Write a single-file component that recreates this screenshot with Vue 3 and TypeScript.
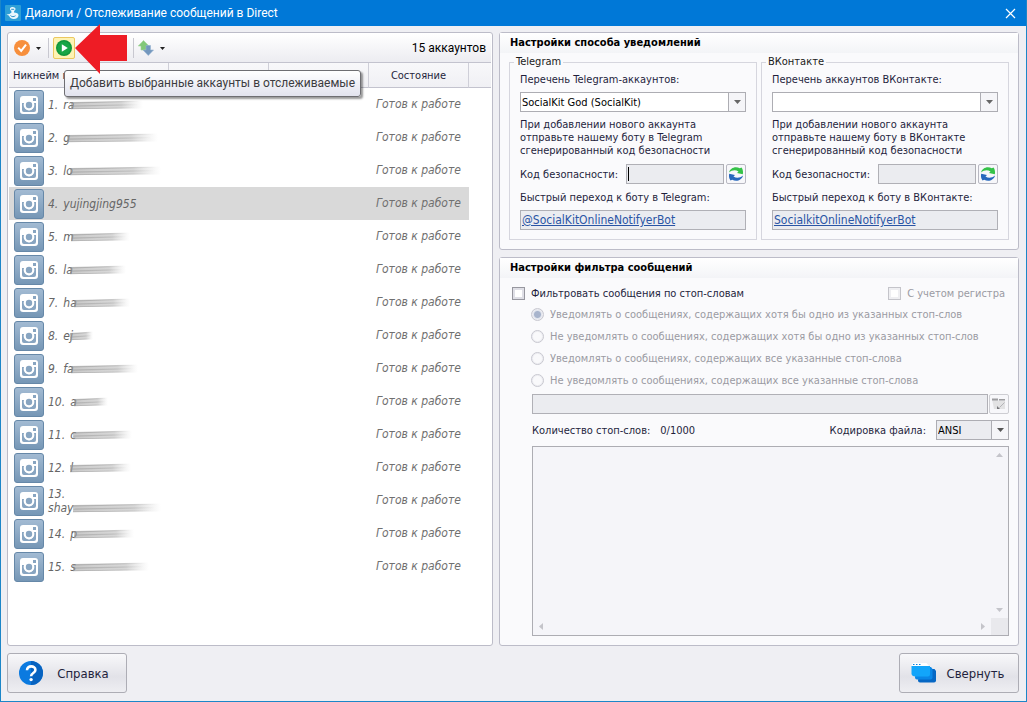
<script setup lang="ts">
import { ref } from 'vue'

interface Account {
  id: number
  name: string
  smudge: number
  wrap?: boolean
}

const accounts: Account[] = [
  { id: 1, name: 'ra', smudge: 72 },
  { id: 2, name: 'g', smudge: 91 },
  { id: 3, name: 'lo', smudge: 91 },
  { id: 4, name: 'yujingjing955', smudge: 0 },
  { id: 5, name: 'm', smudge: 59 },
  { id: 6, name: 'la', smudge: 56 },
  { id: 7, name: 'ha', smudge: 56 },
  { id: 8, name: 'ej', smudge: 23 },
  { id: 9, name: 'fa', smudge: 67 },
  { id: 10, name: 'a', smudge: 34 },
  { id: 11, name: 'c', smudge: 59 },
  { id: 12, name: 'l', smudge: 61 },
  { id: 13, name: 'shay', smudge: 88, wrap: true },
  { id: 14, name: 'p', smudge: 60 },
  { id: 15, name: 's', smudge: 76 },
]

const selected = ref(4)

interface Messenger {
  id: string
  title: string
  listLabel: string
  option: string
  hint: string[]
  linkLabel: string
  link: string
  active: boolean
}

const messengers: Messenger[] = [
  {
    id: 'tg',
    title: 'Telegram',
    listLabel: 'Перечень Telegram-аккаунтов:',
    option: 'SocialKit God (SocialKit)',
    hint: ['При добавлении нового аккаунта', 'отправьте нашему боту в Telegram', 'сгенерированный код безопасности'],
    linkLabel: 'Быстрый переход к боту в Telegram:',
    link: '@SocialKitOnlineNotifyerBot',
    active: true,
  },
  {
    id: 'vk',
    title: 'ВКонтакте',
    listLabel: 'Перечень аккаунтов ВКонтакте:',
    option: '',
    hint: ['При добавлении нового аккаунта', 'отправьте нашему боту в ВКонтакте', 'сгенерированный код безопасности'],
    linkLabel: 'Быстрый переход к боту в ВКонтакте:',
    link: 'SocialkitOnlineNotifyerBot',
    active: false,
  },
]

const modes: string[] = [
  'Уведомлять о сообщениях, содержащих хотя бы одно из указанных стоп-слов',
  'Не уведомлять о сообщениях, содержащих хотя бы одно из указанных стоп-слов',
  'Уведомлять о сообщениях, содержащих все указанные стоп-слова',
  'Не уведомлять о сообщениях, содержащих все указанные стоп-слова',
]
const mode = ref(0)
const filterOn = ref(false)
</script>

<template>
  <div class="window">
    <header class="titlebar">
      <svg class="app-icon" width="16" height="16" viewBox="0 0 16 16">
        <rect width="16" height="16" rx="1" fill="#2e9fd6" />
        <path d="M5 3.2a3 2.2 0 0 1 5.500.2c.2 1-.5 2-1.300 2.300l-.2 1.800c2.500 0 4.500.8 4.500 2.800 0 2.200-2 3.700-4.700 3.700-2.600 0-4.300-1.200-4.700-3.200L1.500 9.500l3-.5 2-1.500-.3-1.700C5.400 5.300 4.800 4.300 5 3.200z" fill="#e9f7fd" />
        <path d="M6.200 4.300h3M5.500 10.500c1.200 1.500 3.500 1.500 5 .2" stroke="#2e8fc6" stroke-width="1" fill="none" />
      </svg>
      <h1>Диалоги / Отслеживание сообщений в Direct</h1>
      <button class="close" type="button" aria-label="Закрыть">
        <svg width="11" height="11" viewBox="0 0 11 11"><path d="M1 1l9 9M10 1l-9 9" stroke="#fff" stroke-width="1.200" /></svg>
      </button>
    </header>

    <main class="content">
      <section class="panel accounts">
        <div class="toolbar">
          <button class="tool" type="button" aria-label="Выбрать">
            <svg width="16" height="16" viewBox="0 0 16 16">
              <circle cx="8" cy="8" r="8" fill="#f78f3c" />
              <path d="M4.200 7.600l3 3.300 4.800-6.200" stroke="#fff" stroke-width="2" fill="none" />
            </svg>
            <svg class="caret" width="5" height="3" viewBox="0 0 5 3"><path d="M0 0h5L2.500 3z" fill="#222" /></svg>
          </button>
          <span class="sep"></span>
          <button class="tool hot" type="button" aria-label="Добавить">
            <svg width="16" height="16" viewBox="0 0 16 16">
              <circle cx="8" cy="8" r="8" fill="#12963c" />
              <circle cx="8" cy="8" r="6.500" fill="#18a545" />
              <path d="M5.800 4.200v7.600L11.800 8z" fill="#fff" />
            </svg>
          </button>
          <span class="gap"></span>
          <span class="sep"></span>
          <button class="tool" type="button" aria-label="Сортировка">
            <svg width="16" height="16" viewBox="0 0 16 16">
              <path d="M5.500.5L11 6H8.500v4H3V6H.3z" fill="#82c878" stroke="#9dd494" stroke-width=".6" />
              <path d="M8 5.500h4.500V10h3L10.300 15.500 5 10h3z" fill="#7397bd" stroke="#93b2d2" stroke-width=".6" />
            </svg>
            <svg class="caret" width="5" height="3" viewBox="0 0 5 3"><path d="M0 0h5L2.500 3z" fill="#222" /></svg>
          </button>
          <span class="count">15 аккаунтов</span>
          <svg class="pointer" width="52" height="50" viewBox="0 0 52 50">
            <path d="M0 24L25 0v11h27v26H25v13z" fill="#ee1c25" />
          </svg>
          <div class="tooltip" role="tooltip">Добавить выбранные аккаунты в отслеживаемые</div>
        </div>

        <table>
          <colgroup>
            <col class="c-name" /><col class="c-mid" /><col class="c-mid" /><col class="c-mid" /><col />
          </colgroup>
          <thead>
            <tr><th class="left">Никнейм п</th><th></th><th></th><th>Состояние</th><th></th></tr>
          </thead>
          <tbody>
            <tr v-for="a in accounts" :key="a.id" :class="{ selected: a.id === selected }" @click="selected = a.id">
              <td colspan="3">
                <div class="account">
                  <svg class="avatar" width="30" height="30" viewBox="0 0 30 30">
                    <defs>
                      <linearGradient :id="'av' + a.id" x1="0" y1="0" x2="0" y2="1">
                        <stop offset="0" stop-color="#a3bbd3" /><stop offset="1" stop-color="#7596b5" />
                      </linearGradient>
                    </defs>
                    <rect x=".5" y=".5" width="29" height="29" rx="2.500" :fill="'url(#av' + a.id + ')'" stroke="#6688a8" />
                    <rect x="6" y="6" width="18" height="18" rx="3" fill="#fff" />
                    <path d="M8 13h3.200a4.600 4.600 0 1 0 7.800 0H22v7a2 2 0 0 1-2 2H10a2 2 0 0 1-2-2z" fill="#88a5c1" />
                    <circle cx="15" cy="15" r="5.400" fill="#fff" />
                    <circle cx="15" cy="15" r="3.200" fill="#88a5c1" />
                    <rect x="19" y="8" width="3" height="3" fill="#88a5c1" />
                  </svg>
                  <span class="nick" :class="{ wrapped: a.wrap }">
                    <span>{{ a.id }}.</span>
                    <span class="handle">{{ a.name }}<svg
                      v-if="a.smudge"
                      class="smudge"
                      :class="{ second: a.wrap }"
                      :width="a.smudge"
                      height="10"
                      viewBox="0 0 90 10"
                      preserveAspectRatio="none"
                    >
                      <defs>
                        <linearGradient :id="'sm' + a.id">
                          <stop offset="0" stop-color="#929292" />
                          <stop offset=".7" stop-color="#a2a2a2" stop-opacity=".85" />
                          <stop offset="1" stop-color="#bbb" stop-opacity="0" />
                        </linearGradient>
                      </defs>
                      <g :fill="'url(#sm' + a.id + ')'">
                        <path d="M0 2L90 .5v8L0 9z" opacity=".5" />
                        <path d="M0 2.500L86 1v.8L0 3.500z" opacity=".6" />
                        <path d="M2 5.500L84 4v1.200L0 6.800z" opacity=".5" />
                        <path d="M0 8.500l80-1.300v.9L0 9.300z" opacity=".6" />
                      </g>
                    </svg></span>
                  </span>
                </div>
              </td>
              <td class="state">Готов к работе</td>
              <td class="rest"></td>
            </tr>
          </tbody>
        </table>
      </section>

      <div class="settings">
        <section class="panel">
          <h2>Настройки способа уведомлений</h2>
          <div class="messengers">
            <fieldset v-for="m in messengers" :key="m.id">
              <legend>{{ m.title }}</legend>
              <label class="line" :for="m.id + '-list'">{{ m.listLabel }}</label>
              <div class="combo">
                <select :id="m.id + '-list'"><option>{{ m.option }}</option></select>
                <span class="drop"><svg width="7" height="4" viewBox="0 0 7 4"><path d="M0 0h7L3.500 4z" fill="#666" /></svg></span>
              </div>
              <p class="hint"><span v-for="h in m.hint" :key="h">{{ h }}</span></p>
              <div class="code">
                <label :for="m.id + '-code'">Код безопасности:</label>
                <span class="field">
                  <input :id="m.id + '-code'" type="text" readonly />
                  <i v-if="m.active" class="cursor"></i>
                </span>
                <button class="mini" type="button" aria-label="Обновить">
                  <svg width="16" height="16" viewBox="0 0 16 16">
                    <path d="M1 6.500C2 2 7.500-.3 11.800 2.300L13.500 1.500C15 3.500 15.300 6 14.800 8.200L9 7l1.500-1.400C7.500 3.500 4 4 1 6.500z" fill="#35c248" />
                    <path d="M15 9.500c-1 4.500-6.500 6.800-10.800 4.200L2.500 14.500C1 12.500.7 10 1.200 7.800L7 9l-1.500 1.400c3 2.100 6.500 1.600 9.500-.9z" fill="#2768bd" />
                  </svg>
                </button>
              </div>
              <p class="line">{{ m.linkLabel }}</p>
              <div class="linkbox"><a href="#">{{ m.link }}</a></div>
            </fieldset>
          </div>
        </section>

        <section class="panel filter">
          <h2>Настройки фильтра сообщений</h2>
          <div class="filter-body">
            <div class="checks">
              <label><input v-model="filterOn" type="checkbox" />Фильтровать сообщения по стоп-словам</label>
              <label class="off"><input type="checkbox" disabled />С учетом регистра</label>
            </div>
            <div class="modes">
              <label v-for="(t, i) in modes" :key="t" class="off">
                <input v-model="mode" type="radio" name="mode" :value="i" disabled />{{ t }}
              </label>
            </div>
            <div class="path">
              <input type="text" aria-label="Файл стоп-слов" disabled />
              <button class="mini" type="button" aria-label="Открыть файл" disabled>
                <svg width="16" height="16" viewBox="0 0 16 16">
                  <path d="M1 3h5l1 1.500h7V13H3z" fill="#e2e2e3" />
                  <path d="M1 2.500h6v2H1zM8 3h6v1.500H8z" fill="#9c9c9f" />
                  <path d="M13.500 6.500l-5 5" stroke="#b4b4b8" fill="none" />
                  <path d="M6 10l3 3H6z" fill="#77777a" />
                </svg>
              </button>
            </div>
            <div class="encoding">
              <span>Количество стоп-слов:</span>
              <span class="total">0/1000</span>
              <label for="enc">Кодировка файла:</label>
              <div class="combo small">
                <select id="enc"><option>ANSI</option></select>
                <span class="drop"><svg width="7" height="4" viewBox="0 0 7 4"><path d="M0 0h7L3.500 4z" fill="#555" /></svg></span>
              </div>
            </div>
            <div class="words">
              <textarea aria-label="Стоп-слова" disabled></textarea>
              <svg class="tri up" width="7" height="4" viewBox="0 0 7 4"><path d="M0 4h7L3.500 0z" /></svg>
              <svg class="tri down" width="7" height="4" viewBox="0 0 7 4"><path d="M0 0h7L3.500 4z" /></svg>
              <svg class="tri prev" width="4" height="7" viewBox="0 0 4 7"><path d="M4 0v7L0 3.500z" /></svg>
              <svg class="tri next" width="4" height="7" viewBox="0 0 4 7"><path d="M0 0v7l4-3.500z" /></svg>
              <span class="corner"></span>
            </div>
          </div>
        </section>
      </div>
    </main>

    <footer>
      <button class="big" type="button">
        <svg width="24" height="24" viewBox="0 0 24 24">
          <circle cx="12" cy="12" r="12" fill="#0b7ae0" />
          <path d="M12 0a12 12 0 0 1 0 24z" fill="#0863c0" />
          <path d="M8 9.200c0-5.200 8.400-5 8.400-.3 0 3.200-4.300 3-4.300 6.300" stroke="#fff" stroke-width="2.600" fill="none" />
          <circle cx="12.100" cy="18.600" r="1.700" fill="#fff" />
        </svg>
        <span>Справка</span>
      </button>
      <button class="big" type="button">
        <svg width="25" height="20" viewBox="0 0 25 20">
          <path d="M9 6h14.500l1.500 2v9.500a2 2 0 0 1-2 2H9a2 2 0 0 1-2-2z" fill="#0667c4" />
          <path d="M5 4h15l1.500 2v8.500a2 2 0 0 1-2 2H6a2 2 0 0 1-2-2z" fill="#0a86e6" />
          <path d="M.5 3H19v8.500a2 2 0 0 1-2 2H4.500c-2.500 0-4-1-4-3z" fill="#12a5fa" />
          <path d="M2 0h13.500l2.500 3H.5z" fill="#fff" />
          <path d="M2 1h1.500v1H2zM5 1h1.500v1H5zM8 1h1.500v1H8z" fill="#0a83e0" />
        </svg>
        <span>Свернуть</span>
      </button>
    </footer>
  </div>
</template>

<style>
body {
  margin: 0;
}
</style>

<style scoped>
* {
  box-sizing: border-box;
}
.window {
  display: flex;
  flex-direction: column;
  min-height: 100vh;
  border: 1px solid #1c86c8;
  border-top: 0;
  background: #efeff3;
  color: #1f1f3c;
  font: 11px/13px "DejaVu Sans Condensed", "Noto Sans", sans-serif;
}
button, input, select, textarea {
  font: inherit;
  color: inherit;
  margin: 0;
}
h1, h2, p {
  margin: 0;
}
.titlebar {
  display: flex;
  align-items: center;
  height: 26px;
  padding: 0 10px 0 4px;
  background: #0078d7;
  color: #fff;
}
.titlebar h1 {
  flex: 1;
  margin-left: 4px;
  font: 12px/16px Roboto, "Noto Sans", sans-serif;
}
.close {
  display: flex;
  padding: 0;
  border: 0;
  background: none;
}
.content {
  flex: 1;
  display: grid;
  grid-template-columns: 486fr 520fr;
  gap: 6px;
  padding: 6px 7px 0 6px;
}
.panel {
  border: 1px solid #bcbcc8;
  border-radius: 3px;
  background: #fafafc;
}
.accounts {
  background: #fff;
  padding: 1px;
}
.toolbar {
  position: relative;
  display: flex;
  align-items: center;
  height: 29px;
  padding: 0 5px;
  border-bottom: 1px solid #c3c3ce;
  background: linear-gradient(#fff, #ececf1);
}
.tool {
  display: flex;
  align-items: center;
  gap: 6px;
  padding: 0;
  border: 0;
  background: none;
}
.hot {
  padding: 2px;
  border: 1px solid #ecc860;
  border-radius: 2px;
  background: #fdf3b4;
}
.sep {
  width: 1px;
  height: 20px;
  margin: 0 4px 0 7px;
  background: #c8c8d0;
}
.gap {
  width: 51px;
}
.count {
  margin-left: auto;
  color: #000;
  font: 12px/16px Roboto, "Noto Sans", sans-serif;
}
.pointer {
  position: absolute;
  z-index: 3;
  left: 66px;
  top: -10px;
}
.tooltip {
  position: absolute;
  z-index: 2;
  left: 55px;
  top: 36px;
  padding: 5px 5px;
  border: 1px solid #6e6e72;
  border-radius: 3px;
  background: linear-gradient(#fff, #e2e3ee);
  box-shadow: 2px 2px 2px rgba(0, 0, 0, .4);
  color: #3c3c40;
  font: 12px/15px Roboto, "Noto Sans", sans-serif;
  white-space: nowrap;
}
table {
  width: 100%;
  table-layout: fixed;
  border-collapse: separate;
  border-spacing: 0;
}
.c-name {
  width: 160px;
}
.c-mid {
  width: 100px;
}
th {
  height: 25px;
  padding: 0;
  border-right: 1px solid #cfcfd8;
  border-bottom: 1px solid #c3c3ce;
  background: linear-gradient(#f8f8fa, #f0f0f4);
  font-weight: normal;
  text-align: center;
  white-space: nowrap;
}
th:last-child {
  border-right: 0;
}
th.left {
  padding-left: 4px;
  text-align: left;
}
td {
  height: 33px;
  padding: 0;
}
.selected td:not(.rest) {
  background: #d9d9d9;
}
.account {
  display: flex;
  align-items: center;
  padding-left: 5px;
}
.nick {
  display: flex;
  gap: 5px;
  margin-left: 4px;
  color: #666;
  font-size: 12px;
  line-height: 14px;
  font-style: italic;
}
.nick.wrapped {
  flex-direction: column;
  gap: 0;
}
.handle {
  display: flex;
  align-items: center;
}
.smudge {
  margin-left: -3px;
}
.smudge.second {
  margin-left: 0;
}
.state {
  padding-left: 7px;
  color: #707070;
  font-size: 12px;
  font-style: italic;
  white-space: nowrap;
}
.settings {
  display: flex;
  flex-direction: column;
  gap: 7px;
}
h2 {
  height: 20px;
  padding-left: 10px;
  background: linear-gradient(#fff, #f3f4f7);
  color: #000;
  font-size: 11px;
  line-height: 20px;
}
.messengers {
  display: grid;
  grid-template-columns: 1fr 1fr;
  gap: 4px;
  padding: 3px 9px 9px;
}
fieldset {
  display: block;
  min-width: 0;
  margin: 0;
  padding: 6px 10px 9px;
  border: 1px solid #d6d6de;
}
legend {
  margin-left: -6px;
  padding: 0 2px;
  line-height: 12px;
  color: #1a1a1a;
}
.line {
  display: block;
  line-height: 12px;
}
.combo {
  position: relative;
  height: 20px;
  margin: 6px 0;
}
.combo select {
  appearance: none;
  display: block;
  width: 100%;
  height: 100%;
  padding: 0 20px 0 1px;
  border: 1px solid #adadb3;
  border-radius: 0;
  background: #fff;
  color: #000;
}
.drop {
  position: absolute;
  right: 0;
  top: 0;
  display: flex;
  align-items: center;
  justify-content: center;
  width: 18px;
  height: 100%;
  border: 1px solid #adadb3;
  background: #f5f5f8;
  pointer-events: none;
}
.hint span {
  display: block;
  white-space: nowrap;
}
.code {
  display: flex;
  align-items: center;
  gap: 2px;
  height: 20px;
  margin: 7px 0 8px;
}
.code label {
  flex: 1;
  white-space: nowrap;
}
.field {
  position: relative;
  width: 98px;
  height: 20px;
}
.field input, .path input {
  width: 100%;
  height: 20px;
  padding: 0 3px;
  border: 1px solid #b0b0b6;
  background: #ebecf0;
}
.field input {
  outline: none;
}
.cursor {
  position: absolute;
  left: 2px;
  top: 3px;
  width: 1px;
  height: 14px;
  background: #000;
}
.mini {
  flex: none;
  display: flex;
  align-items: center;
  justify-content: center;
  width: 20px;
  height: 20px;
  padding: 0;
  border: 1px solid #b8b8c2;
  border-radius: 2px;
  background: #f7f7fa;
}
.linkbox {
  height: 20px;
  margin-top: 6px;
  padding-left: 1px;
  border: 1px solid #b0b0b6;
  background: #ebecf0;
}
.linkbox a {
  color: #2a55a5;
  font-size: 12px;
  line-height: 18px;
}
.filter {
  flex: 1;
  display: flex;
  flex-direction: column;
}
.filter-body {
  flex: 1;
  display: flex;
  flex-direction: column;
  padding: 9px 9px 9px 32px;
}
.checks {
  display: flex;
  justify-content: space-between;
  margin-left: -20px;
  padding-right: 4px;
}
.checks label, .modes label {
  display: flex;
  align-items: center;
  gap: 6px;
  white-space: nowrap;
}
.off {
  color: #9b9ba3;
}
.checks input {
  appearance: none;
  width: 13px;
  height: 13px;
  border: 1px solid #97979f;
  background: #fff;
  box-shadow: inset 0 0 0 2px #dfdfe6;
}
.checks input:checked {
  background: #5277ad;
}
.checks input:disabled {
  border-color: #c4c4ca;
  box-shadow: inset 0 0 0 2px #efeff2;
}
.modes {
  margin: 3px 0 3px -1px;
}
.modes label {
  height: 22px;
}
.modes input {
  appearance: none;
  width: 13px;
  height: 13px;
  border: 1px solid #c8c8d0;
  border-radius: 50%;
  background: #f9f9fb;
  box-shadow: inset 0 0 0 1px #ededf2;
}
.modes input:checked {
  background: radial-gradient(#a8b4cc 0 3px, #e0e4ed 4px);
}
.path {
  display: flex;
  gap: 1px;
}
.path input {
  flex: 1;
}
.path .mini {
  border-color: #cdcdd2;
}
.encoding {
  display: flex;
  align-items: center;
  margin: 6px 0;
}
.encoding .total {
  margin-left: 10px;
}
.encoding label {
  margin-left: auto;
}
.small {
  width: 73px;
  margin: 0 0 0 10px;
}
.small select {
  background: #ebecf0;
}
.words {
  position: relative;
  flex: 1;
  display: flex;
}
textarea {
  flex: 1;
  resize: none;
  border: 1px solid #adadb3;
  background: #f5f5f9;
}
.tri {
  position: absolute;
  fill: #c4c4ca;
}
.up {
  right: 6px;
  top: 7px;
}
.down {
  right: 6px;
  bottom: 24px;
}
.prev {
  left: 7px;
  bottom: 6px;
}
.next {
  right: 24px;
  bottom: 6px;
}
.corner {
  position: absolute;
  right: 1px;
  bottom: 1px;
  width: 17px;
  height: 17px;
  background: #e9e9ed;
}
footer {
  display: flex;
  justify-content: space-between;
  padding: 7px 7px 8px 6px;
}
.big {
  display: flex;
  align-items: center;
  width: 120px;
  height: 40px;
  padding: 0 11px;
  border: 1px solid #adadb5;
  border-radius: 3px;
  background: linear-gradient(#f8f8fa, #e2e2e8 60%, #eeeef2);
  font-size: 13px;
}
.big span {
  flex: 1;
  padding-left: 8px;
  white-space: nowrap;
}
</style>
